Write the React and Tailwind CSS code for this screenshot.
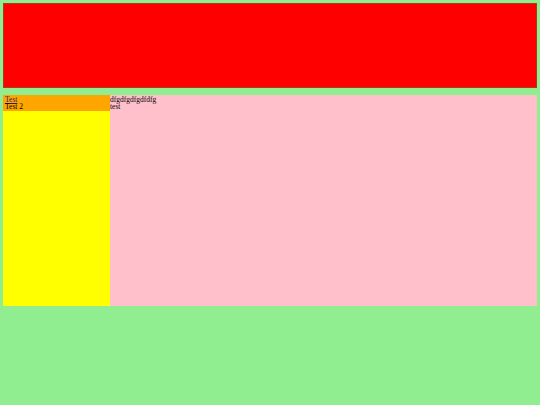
export default function App() {
  return (
    <div className="min-h-[405px] w-[540px] bg-[#90ee90] pt-[3px] font-['Liberation_Serif',serif] text-[7.5px] leading-[7.5px] text-black">
      <header className="mx-[3px] h-[85px] border border-[#b03a1a] bg-[#ff0000]" />
      <div className="mx-[3px] mt-[7px] flex h-[211px]">
        <aside className="w-[107px] bg-[#ffff00]">
          <div className="bg-[#ffa500] px-[2px] py-[0.5px]">
            <a href="#" className="block text-[#3a1a5b] underline">Test</a>
            <div>Test 2</div>
          </div>
        </aside>
        <main className="flex-1 bg-[#ffc0cb] pt-[0.5px]">
          <div>dfgdfgdfgdfdfg</div>
          <div>test</div>
        </main>
      </div>
    </div>
  );
}
